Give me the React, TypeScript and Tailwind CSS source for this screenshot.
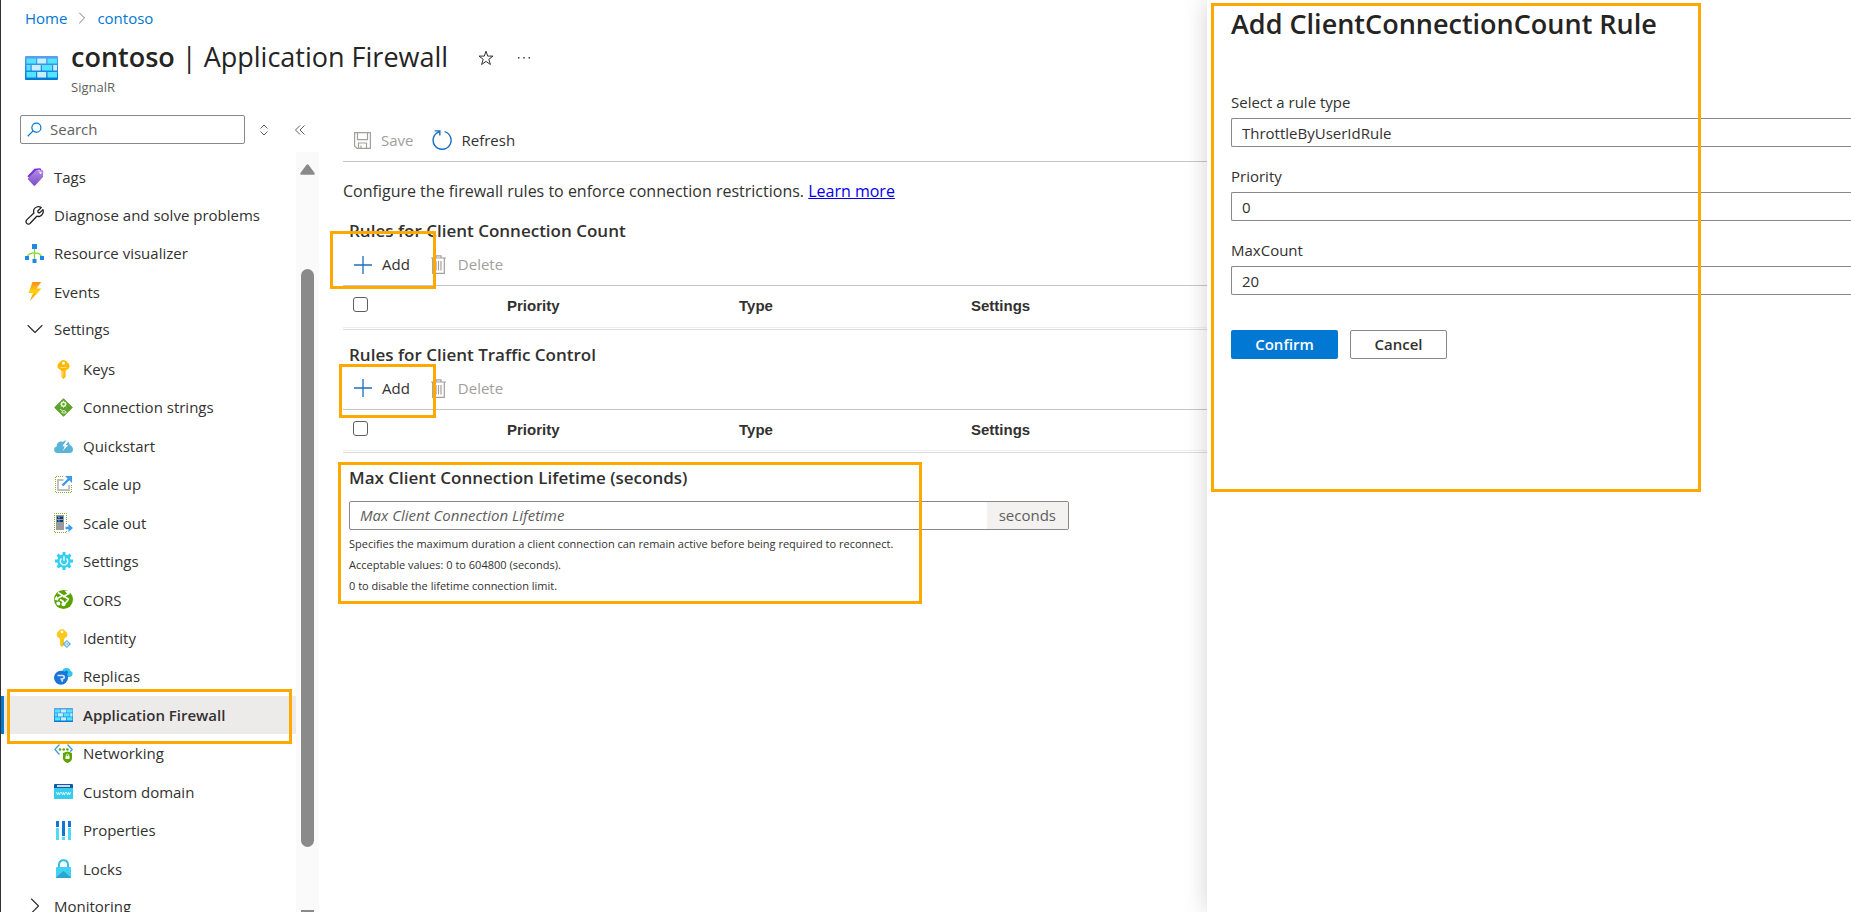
import { ChevronDown, ChevronRight } from "lucide-react";
import type { ReactNode } from "react";

type NavItem = {
    label: string;
    icon: ReactNode;
    active?: boolean;
};

const TOP_ITEMS: NavItem[] = [
    { label: "Tags", icon: <TagIcon /> },
    { label: "Diagnose and solve problems", icon: <WrenchIcon /> },
    { label: "Resource visualizer", icon: <VisualizerIcon /> },
    { label: "Events", icon: <BoltIcon /> },
];

const SETTINGS_ITEMS: NavItem[] = [
    { label: "Keys", icon: <KeyIcon /> },
    { label: "Connection strings", icon: <ConnectionIcon /> },
    { label: "Quickstart", icon: <QuickstartIcon /> },
    { label: "Scale up", icon: <ScaleUpIcon /> },
    { label: "Scale out", icon: <ScaleOutIcon /> },
    { label: "Settings", icon: <GearIcon /> },
    { label: "CORS", icon: <CorsIcon /> },
    { label: "Identity", icon: <IdentityIcon /> },
    { label: "Replicas", icon: <ReplicasIcon /> },
    { label: "Application Firewall", icon: <FirewallIcon className="h-[14px] w-[19px]" />, active: true },
    { label: "Networking", icon: <NetworkingIcon /> },
    { label: "Custom domain", icon: <DomainIcon /> },
    { label: "Properties", icon: <PropertiesIcon /> },
    { label: "Locks", icon: <LockIcon /> },
];

export default function App() {
    return (
        <div className="flex h-screen overflow-hidden border-l border-[#333] bg-white font-['Open_Sans','Noto_Sans',sans-serif] text-[15px] text-[#323130]">
            <div className="flex min-w-0 flex-1 flex-col">
                <PageHeader />
                <div className="flex min-h-0 flex-1">
                    <Sidebar />
                    <FirewallSettings />
                </div>
            </div>
            <AddRulePanel />
        </div>
    );
}

function PageHeader() {
    return (
        <header className="h-[103px] shrink-0 pt-[7px] pl-6">
            <nav aria-label="Breadcrumb" className="flex h-[22px] items-center gap-[5px] text-[#0078d4]">
                <a href="#home">Home</a>
                <ChevronRight size={20} strokeWidth={1} className="text-[#605e5c]" />
                <a href="#contoso">contoso</a>
            </nav>
            <div className="mt-[5px] flex items-start">
                <FirewallIcon className="mt-[22px] h-6 w-[33px]" />
                <div className="ml-[13px]">
                    <h1 className="text-[27px] leading-[45px] text-[#252423]">
                        <span className="font-semibold">contoso</span> | Application Firewall
                    </h1>
                    <p className="text-[13px] leading-4 text-[#605e5c]">SignalR</p>
                </div>
                <button aria-label="Add to favorites" className="mt-4 ml-[30px]">
                    <svg viewBox="0 0 16 16" className="size-4" fill="none" stroke="#323130">
                        <path d="M8 1.2 9.7 6.1H15L10.8 9.3 12.4 14.5 8 11.4 3.6 14.5 5.2 9.3 1 6.1H6.3Z" />
                    </svg>
                </button>
                <button aria-label="More" className="mt-4 ml-[22px]">
                    <svg viewBox="0 0 16 16" className="size-4" fill="#323130">
                        <path d="M2 7h1.4v1.4H2zM7.3 7h1.4v1.4H7.3zM12.6 7H14v1.4h-1.4z" />
                    </svg>
                </button>
            </div>
        </header>
    );
}

function Sidebar() {
    return (
        <aside className="flex w-[318px] shrink-0 flex-col">
            <div className="flex items-center pt-3 pl-[19px]">
                <label className="flex h-[29px] w-[225px] items-center gap-2 rounded-xs border border-[#8a8886] px-[6px] pb-px">
                    <svg viewBox="0 0 16 16" className="size-[15px] shrink-0" fill="none" stroke="#0078d4" strokeWidth="1.3">
                        <circle cx="10" cy="6" r="4.8" />
                        <path d="M6.5 9.5.8 15.2" />
                    </svg>
                    <input
                        type="text"
                        aria-label="Search"
                        placeholder="Search"
                        className="w-full bg-transparent outline-none placeholder:text-[#605e5c]"
                    />
                </label>
                <button aria-label="Sort" className="ml-[13px]">
                    <svg viewBox="0 0 12 12" className="size-3" fill="none" stroke="#605e5c">
                        <path d="M2.5 4.5 6 1l3.5 3.5M2.5 7.5 6 11l3.5-3.5" />
                    </svg>
                </button>
                <button aria-label="Collapse menu" className="ml-6">
                    <svg viewBox="0 0 12 12" className="size-3" fill="none" stroke="#605e5c">
                        <path d="M6 1.5 1.5 6 6 10.5M10.5 1.5 6 6l4.5 4.5" />
                    </svg>
                </button>
            </div>

            <div className="mt-2 flex min-h-0 flex-1">
                <nav aria-label="Resource menu" className="min-w-0 flex-1">
                    <ul className="grid h-[159px] auto-rows-fr pt-[6px]">
                        {TOP_ITEMS.map(item => (
                            <li key={item.label}>
                                <NavLink {...item} indent="pl-6" />
                            </li>
                        ))}
                    </ul>
                    <GroupToggle label="Settings" open />
                    <ul className="mt-[3px] grid h-[538px] auto-rows-fr">
                        {SETTINGS_ITEMS.map(item => (
                            <li key={item.label} className="relative">
                                <NavLink {...item} indent="pl-[53px]" />
                                {item.active && <Highlight className="-top-[7px] -bottom-[10px] left-[6px] right-[4px]" />}
                            </li>
                        ))}
                    </ul>
                    <GroupToggle label="Monitoring" />
                </nav>
                <Scrollbar />
            </div>
        </aside>
    );
}

function NavLink({ label, icon, active, indent }: NavItem & { indent: string }) {
    return (
        <a
            href="#"
            aria-current={active ? "page" : undefined}
            className={`flex h-full items-center gap-[10px] ${indent} ${active ? "bg-[#edebe9] font-semibold shadow-[inset_3px_0_0_#0078d4]" : ""}`}
        >
            <span className="flex w-[19px] shrink-0 justify-center">{icon}</span>
            <span className="whitespace-nowrap">{label}</span>
        </a>
    );
}

function GroupToggle({ label, open = false }: { label: string; open?: boolean }) {
    const Chevron = open ? ChevronDown : ChevronRight;
    return (
        <button aria-expanded={open} className="flex h-9 w-full items-center gap-[10px] pl-6">
            <span className="flex w-[19px] justify-center">
                <Chevron size={28} strokeWidth={1} className="shrink-0" />
            </span>
            {label}
        </button>
    );
}

function Scrollbar() {
    return (
        <div aria-hidden className="flex w-[23px] flex-col items-center bg-[#fafafa] pt-3">
            <svg viewBox="0 0 15 11" className="h-[11px] w-[15px]" fill="#8a8a8a">
                <path d="M6.5.8a1.3 1.3 0 0 1 2 0l5.900 8a1.2 1.2 0 0 1-1 2H1.600a1.2 1.2 0 0 1-1-2z" />
            </svg>
            <div className="mt-[94px] w-[13px] flex-1 rounded-full bg-[#8a8a8a]" />
            <div className="mt-[63px] h-[2px] w-[13px] bg-[#8a8a8a]" />
        </div>
    );
}

function FirewallSettings() {
    return (
        <main className="min-w-0 flex-1 pt-[18px] pl-6">
            <div className="flex h-[41px] items-center border-b border-[#c8c6c4] pb-[2px] pl-[11px]">
                <button disabled className="flex items-center gap-[10px] text-[#a19f9d]">
                    <svg viewBox="0 0 17 17" className="size-[17px]" fill="none" stroke="currentColor" strokeWidth="1.2">
                        <path d="M.6.6h15.8v15.8H3L.6 14ZM3.500.6v7h10v-7M4.500 16.400v-5.400h8v5.400M7 16v-2.500" />
                    </svg>
                    Save
                </button>
                <button className="ml-[19px] flex items-center gap-[9px]">
                    <RefreshIcon />
                    Refresh
                </button>
            </div>

            <p className="pt-[17px] pb-[3px] text-base leading-6">
                Configure the firewall rules to enforce connection restrictions.{" "}
                <a href="#learn" className="text-[#0000ee] underline">Learn more</a>
            </p>

            <RuleSection title="Rules for Client Connection Count" highlight="-top-[13px] -left-[13px] h-[58px] w-[106px]" />
            <RuleSection title="Rules for Client Traffic Control" highlight="-top-[4px] -left-[4px] h-[54px] w-[97px]" />

            <section className="relative pt-3 pl-[6px]">
                <h2 className="text-[17px] leading-[26px] font-semibold">
                    <label htmlFor="lifetime">Max Client Connection Lifetime (seconds)</label>
                </h2>
                <div className="mt-[10px] flex h-[29px] w-[720px] overflow-hidden rounded-xs border border-[#8a8886]">
                    <input
                        id="lifetime"
                        type="text"
                        placeholder="Max Client Connection Lifetime"
                        className="min-w-0 flex-1 px-[10px] outline-none placeholder:text-[#605e5c] placeholder:italic"
                    />
                    <span className="flex items-center bg-[#f3f2f1] px-3 text-[#605e5c]">seconds</span>
                </div>
                <div className="mt-[3px] text-[11px] leading-[21px]">
                    <p>Specifies the maximum duration a client connection can remain active before being required to reconnect.</p>
                    <p>Acceptable values: 0 to 604800 (seconds).</p>
                    <p>0 to disable the lifetime connection limit.</p>
                </div>
                <Highlight className="top-[9px] -left-[5px] h-[142px] w-[584px]" />
            </section>
        </main>
    );
}

function RuleSection({ title, highlight }: { title: string; highlight: string }) {
    return (
        <section className="pt-3">
            <h2 className="pl-[6px] text-[17px] leading-[26px] font-semibold">{title}</h2>
            <div className="relative flex h-[42px] items-center border-b border-[#c8c6c4] pl-[11px]">
                <button className="flex items-center gap-[10px]">
                    <svg viewBox="0 0 18 18" className="size-[18px]" stroke="#1b6ec2" strokeWidth="1.3">
                        <path d="M9 0v18M0 9h18" />
                    </svg>
                    Add
                </button>
                <button disabled className="ml-[21px] flex items-center gap-3 text-[#a19f9d]">
                    <svg viewBox="0 0 15 19" className="h-[19px] w-[15px]" fill="none" stroke="currentColor" strokeWidth="1.2">
                        <path d="M0 3h15M5 3V.8h5V3M1.700 3v15.300h11.600V3M5 6v9.500M7.500 6v9.500M10 6v9.500" />
                    </svg>
                    Delete
                </button>
                <Highlight className={highlight} />
            </div>
            <div className="border-b border-[#dcdcdc] pb-px">
                <table className="w-full table-fixed text-left font-['Liberation_Sans',Arial,sans-serif] text-[15px]">
                    <thead>
                        <tr className="h-[41px] border-b border-[#f3eeee]">
                            <th className="w-[164px] pt-[11px] pl-[10px] align-top">
                                <input type="checkbox" aria-label="Select all rules" className="block size-[15px] appearance-none rounded-[3px] border border-[#605e5c]" />
                            </th>
                            <th className="w-[232px]">Priority</th>
                            <th className="w-[232px]">Type</th>
                            <th>Settings</th>
                        </tr>
                    </thead>
                </table>
            </div>
        </section>
    );
}

function AddRulePanel() {
    return (
        <section aria-labelledby="panel-title" className="relative w-[644px] shrink-0 bg-white pt-1 pl-6 shadow-[0_0_22px_rgba(0,0,0,0.18)]">
            <h2 id="panel-title" className="text-[27px] leading-10 font-semibold text-[#252423]">Add ClientConnectionCount Rule</h2>
            <form className="mt-[46px] flex flex-col">
                <Field id="rule-type" label="Select a rule type" value="ThrottleByUserIdRule" />
                <Field id="priority" label="Priority" value="0" />
                <Field id="max-count" label="MaxCount" value="20" />
                <div className="mt-[18px] flex gap-3 font-semibold">
                    <button type="button" className="h-[29px] w-[107px] rounded-xs bg-[#0078d4] text-white">Confirm</button>
                    <button type="button" className="h-[29px] w-[97px] rounded-xs border border-[#8a8886]">Cancel</button>
                </div>
            </form>
            <Highlight className="top-[3px] left-[4px] h-[489px] w-[490px]" />
        </section>
    );
}

function Field({ id, label, value }: { id: string; label: string; value: string }) {
    return (
        <div className="mb-[17px] flex flex-col">
            <label htmlFor={id} className="h-7 leading-6">{label}</label>
            <input
                id={id}
                type="text"
                defaultValue={value}
                className="h-[29px] rounded-l-xs border border-r-0 border-[#8a8886] px-[10px] outline-none"
            />
        </div>
    );
}

function Highlight({ className }: { className: string }) {
    return <div aria-hidden className={`pointer-events-none absolute z-10 border-3 border-[#ffa800] ${className}`} />;
}

/* Icons */

function FirewallIcon({ className }: { className: string }) {
    return (
        <svg viewBox="0 0 33 24" className={`shrink-0 ${className}`}>
            <defs>
                <linearGradient id="wall" x1="0" y1="0" x2="0" y2="1">
                    <stop offset="0" stopColor="#5ea0ef" />
                    <stop offset="1" stopColor="#0078d4" />
                </linearGradient>
            </defs>
            <rect width="33" height="24" rx="1" fill="url(#wall)" />
            <path fill="#50e6ff" d="M1.500 2.500H11v5H1.500zM22.500 2.500H32v5h-9.500zM17 9h10v5.500H17zM1.500 9h4v5.500h-4zM1.500 16H11v5.500H1.500zM22.500 16H32v5.500h-9.500z" />
            <path fill="#c3f1ff" d="M12.200 2.500h9v5h-9zM6.700 9h9v5.500h-9zM28.200 9H32v5.500h-3.800zM12.200 16h9v5.500h-9z" />
        </svg>
    );
}

function RefreshIcon() {
    return (
        <svg viewBox="0 0 20 20" className="size-5" fill="none" stroke="#1b6ec2" strokeWidth="1.4">
            <path d="M12.600 1.600A9 9 0 1 1 7 1.800M2.600.9h5.200v4.600" />
        </svg>
    );
}

function TagIcon() {
    return (
        <svg viewBox="0 0 18 18" className="size-[18px]">
            <defs>
                <linearGradient id="tag" x1="0" y1="0" x2="0" y2="1">
                    <stop offset="0" stopColor="#b48be6" />
                    <stop offset="1" stopColor="#7d4fc4" />
                </linearGradient>
            </defs>
            <path d="M1.300 8.200 8.500.8 13.500.2q1.500 0 1.700 1.300l-1 5-6 7z" fill="#7533d6" />
            <path d="M2.500 9.800 10.500 2H16q1.300.2 1.300 1.500L17 9l-7.800 8.400q-.8.6-1.600 0L2 11.500q-.5-.9.5-1.700z" fill="url(#tag)" />
            <circle cx="14.500" cy="4.800" r="1.100" fill="#fff" />
            <path d="M13 1.500v2.200" stroke="#fff" strokeWidth=".8" />
        </svg>
    );
}

function WrenchIcon() {
    return (
        <svg viewBox="0 0 19 19" className="size-[19px]" fill="none" stroke="#1f1f1f" strokeWidth="1.3" strokeLinejoin="round">
            <path d="M16.200 1.600 12.800 5l.4 1.500 1.500.4 3.200-3.300c1 2.600-.3 5.800-3.200 6.700-1 .3-2 .2-2.900-.1L5.200 17.300a2.300 2.300 0 0 1-3.500 0 2.300 2.300 0 0 1 0-3.400L8.900 7C8 4 9.600 1.700 11.700 1c1.600-.6 3.200-.3 4.500.6z" />
        </svg>
    );
}

function VisualizerIcon() {
    return (
        <svg viewBox="0 0 19 19" className="size-[19px]">
            <path d="M9.500 5v11M2 14c.5-4 4-5.200 7.500-5.200S16.500 10 17 14" fill="none" stroke="#86d633" strokeWidth="1.3" />
            <path fill="#1e88e5" d="M7 0h5v5H7zM0 12h4v4H0zM15 12h4v4h-4zM7.500 15h4v4h-4z" />
        </svg>
    );
}

function BoltIcon() {
    return (
        <svg viewBox="0 0 18 19" className="h-[19px] w-[18px]">
            <defs>
                <linearGradient id="bolt" x1="0" y1="0" x2="0" y2="1">
                    <stop offset="0" stopColor="#f78d1e" />
                    <stop offset=".5" stopColor="#ffd400" />
                    <stop offset="1" stopColor="#f78d1e" />
                </linearGradient>
            </defs>
            <path d="M6.500 0h8.700L10.500 6.500h5L4 19l3-8H2.500z" fill="url(#bolt)" />
        </svg>
    );
}

function KeyIcon() {
    return (
        <svg viewBox="0 0 13 19" className="h-[19px] w-[13px]">
            <path fillRule="evenodd" fill="#ffb900" d="M4.300.8Q6.500-.6 8.700.8l2.700 2.400Q13.400 5.500 12 8.200L8.600 10.800v6.200L6.500 19l-2-1.800V10.800L1 8.200Q-.4 5.500 1.600 3.200zM6.500 1.500a1.500 1.500 0 1 0 0 3 1.500 1.500 0 0 0 0-3z" />
            <path d="M3.500 7.500h6M5.800 11v6" stroke="#ffe08a" strokeWidth=".9" />
        </svg>
    );
}

function ConnectionIcon() {
    return (
        <svg viewBox="0 0 19 19" className="size-[19px]">
            <path fill="#5ea32a" stroke="#5ea32a" strokeLinejoin="round" d="M9.500.7 18.300 9.500 9.500 18.300.7 9.500z" />
            <g fill="none" stroke="#e8f5dc">
                <circle cx="9.500" cy="6.200" r="2" strokeWidth="1.500" />
                <path d="M9.500 2.800v1.500M9.500 8.200v1.500M6.200 6.200h1.500M11.300 6.200h1.500M7.200 3.900l1 1M10.800 7.500l1 1M11.800 3.900l-1 1M8.200 7.500l-1 1" strokeWidth="1" />
                <path d="M6.200 11.300l2.600 1.800M8.300 15q-1.200-1.100.4-1.900 1.200-1.100 2.400 0 2 .8.600 1.900z" strokeWidth="1" />
            </g>
        </svg>
    );
}

function QuickstartIcon() {
    return (
        <svg viewBox="0 0 19 13" className="h-[13px] w-[19px]">
            <path fill="#59b4d9" d="M3.500 13C-.8 13-.8 7 2.600 6.500 2.600 2.500 6 .5 8.800 2 10.500-.5 15-.3 15.600 4.500 16.500 5.500 19 6.500 19 9.500 19 12 17.500 13 15.800 13z" />
            <path fill="#fff" d="M12.500 0 8.300 6.200h2.500L8.800 11l5.400-6h-2.400L15 .5z" />
        </svg>
    );
}

function ScaleUpIcon() {
    return (
        <svg viewBox="0 0 17 17" className="size-[17px]" fill="none">
            <path d="M8 .5H.5v16h16V9" stroke="#7cb82f" strokeDasharray="1 1" />
            <path d="M8.500 4H3v10h11V9" stroke="#bdbdbd" strokeWidth="1.800" />
            <path d="M7.500 9.500 15 2" stroke="#3a9bea" strokeWidth="2.400" />
            <path d="M10 0h7v7z" fill="#3a9bea" />
        </svg>
    );
}

function ScaleOutIcon() {
    return (
        <svg viewBox="0 0 19 20" className="h-5 w-[19px]">
            <path d="M12.500 11V.5H.5v19h12V18" fill="none" stroke="#7cb82f" strokeDasharray="1 1" />
            <path fill="#9a9a9a" d="M2 2h8v15H2z" />
            <path fill="#0b3f73" d="M3 3.500h6V6H3zM3 7h6v2H3z" />
            <path d="M4 4.700h2M4 8h2" stroke="#50a8f0" />
            <path fill="#3a9bea" d="M11.500 13.800h3V11l4.500 4-4.500 4v-2.800h-3z" />
        </svg>
    );
}

function GearIcon() {
    return (
        <svg viewBox="0 0 18 18" className="size-[18px]">
            <g stroke="#32d0f0" strokeWidth="3">
                <path d="M9 0v18M0 9h18M2.600 2.600l12.800 12.800M15.400 2.600 2.600 15.400" />
            </g>
            <circle cx="9" cy="9" r="6.800" fill="#32d0f0" />
            <path d="M6.400 6.500a3.700 3.700 0 1 0 5.200 0M9 4.300v4.500" fill="none" stroke="#fff" strokeWidth="1.400" />
        </svg>
    );
}

function CorsIcon() {
    return (
        <svg viewBox="0 0 19 19" className="size-[19px]">
            <circle cx="9.500" cy="9.500" r="9.500" fill="#57a300" />
            <g stroke="#fff" fill="#fff" strokeWidth="1.600">
                <path d="M4 2.500 15 9.500M14.500 3.500 9 7M3 8.500l5-2.500M6 9.500l4 2.500M14 10l-4 4.500" fill="none" />
                <path d="m11.500 1.500 3.500 3 .5-3zM1 9.500l3 .5-1.500-3.500z" strokeWidth="1" />
                <circle cx="4.500" cy="13.500" r="1.100" />
                <circle cx="9.500" cy="14.200" r="1.300" />
                <path d="M2.500 13h3" />
            </g>
        </svg>
    );
}

function IdentityIcon() {
    return (
        <svg viewBox="0 0 15 19" className="h-[19px] w-[15px]">
            <path fillRule="evenodd" fill="#fbc81c" d="M4 .8q2-1.400 4 0l2.400 2.200q1.700 2.200.4 4.500L8 10v6l-2 2-2-1.700V10L1.200 7.500Q0 5.200 1.600 3zM6 1.600a1.300 1.300 0 1 0 0 2.600 1.300 1.300 0 0 0 0-2.600z" />
            <path fill="#5aa9d6" d="m10.800 11 4.200 4-4.200 4-4.100-4z" />
            <path d="m10.800 12.800-2 2.200 2 2.200 2-2.200zM10.800 12.800v4.400" fill="none" stroke="#e6f5fc" strokeWidth=".9" />
        </svg>
    );
}

function ReplicasIcon() {
    return (
        <svg viewBox="0 0 19 17" className="h-[17px] w-[19px]">
            <path fill="#32c5e9" d="M8 4q.5-4 4.500-4 3.500 0 4 3 2.500.8 2 3.500Q18 9 15 9H9z" />
            <circle cx="7" cy="9.700" r="7" fill="#1b74d8" />
            <path d="M3.500 7.500h5q2 .3 1.800 2-.3 1.300-2.300 1.300M6.500 10.500q2 .5 1.800 3.300" fill="none" stroke="#cfe6fb" strokeWidth="1.700" />
            <circle cx="12.300" cy="4.500" r="1.700" fill="#1b74d8" />
        </svg>
    );
}

function NetworkingIcon() {
    return (
        <svg viewBox="0 0 19 19" className="size-[19px]">
            <path d="M5.500.5.800 5.500l4.700 5M13.500.5l4.700 5-2 2.200" fill="none" stroke="#3c9fd6" strokeWidth="1.300" />
            <g fill="#5ea300">
                <circle cx="6" cy="5.500" r="1.300" />
                <circle cx="9.700" cy="5.500" r="1.300" />
                <circle cx="13.400" cy="5.500" r="1.300" />
                <path d="m9 9 4.500-1.500L18 9v5.500q-.5 3-4.500 4.500Q9.500 17.500 9 14.500z" />
            </g>
            <path d="M11.500 12h4v3h-4z" fill="#fff" />
            <path d="M12.300 12v-1.200q1.200-1.300 2.400 0V12" fill="none" stroke="#fff" strokeWidth=".9" />
        </svg>
    );
}

function DomainIcon() {
    return (
        <svg viewBox="0 0 19 15" className="h-[15px] w-[19px]">
            <path fill="#36cdec" d="M0 4h19v10.500l-.5.5H.5L0 14.500z" />
            <path fill="#0f5ba7" d="M.5 0h18l.5.5V4H0V.5z" />
            <path fill="#fff" d="M3 1.200h13v1.600H3z" />
            <path d="m2.500 8 1 3 1-2.500 1 2.500 1-3M7.500 8l1 3 1-2.500 1 2.500 1-3M12.500 8l1 3 1-2.500 1 2.500 1-3" fill="none" stroke="#fff" strokeWidth=".8" />
        </svg>
    );
}

function PropertiesIcon() {
    return (
        <svg viewBox="0 0 15 19" className="h-[19px] w-[15px]">
            <path fill="#1177d4" d="M0 0h3v6H0zM6 0h3v15H6zM12 0h3v6h-3z" />
            <path fill="#4ddcf8" d="M0 7h3v12H0zM6 16h3v3H6zM12 7h3v12h-3z" />
        </svg>
    );
}

function LockIcon() {
    return (
        <svg viewBox="0 0 15 19" className="h-[19px] w-[15px]">
            <path d="M3 9V5.500q.3-4.300 4.500-4.300T12 5.500V9" fill="none" stroke="#32bedd" strokeWidth="2" />
            <rect y="8" width="15" height="11" rx=".8" fill="#40d2f0" />
            <path d="M0 18.500 7.500 12l7.500 6.500-.5.5H.5z" fill="#2aa5cf" />
        </svg>
    );
}
